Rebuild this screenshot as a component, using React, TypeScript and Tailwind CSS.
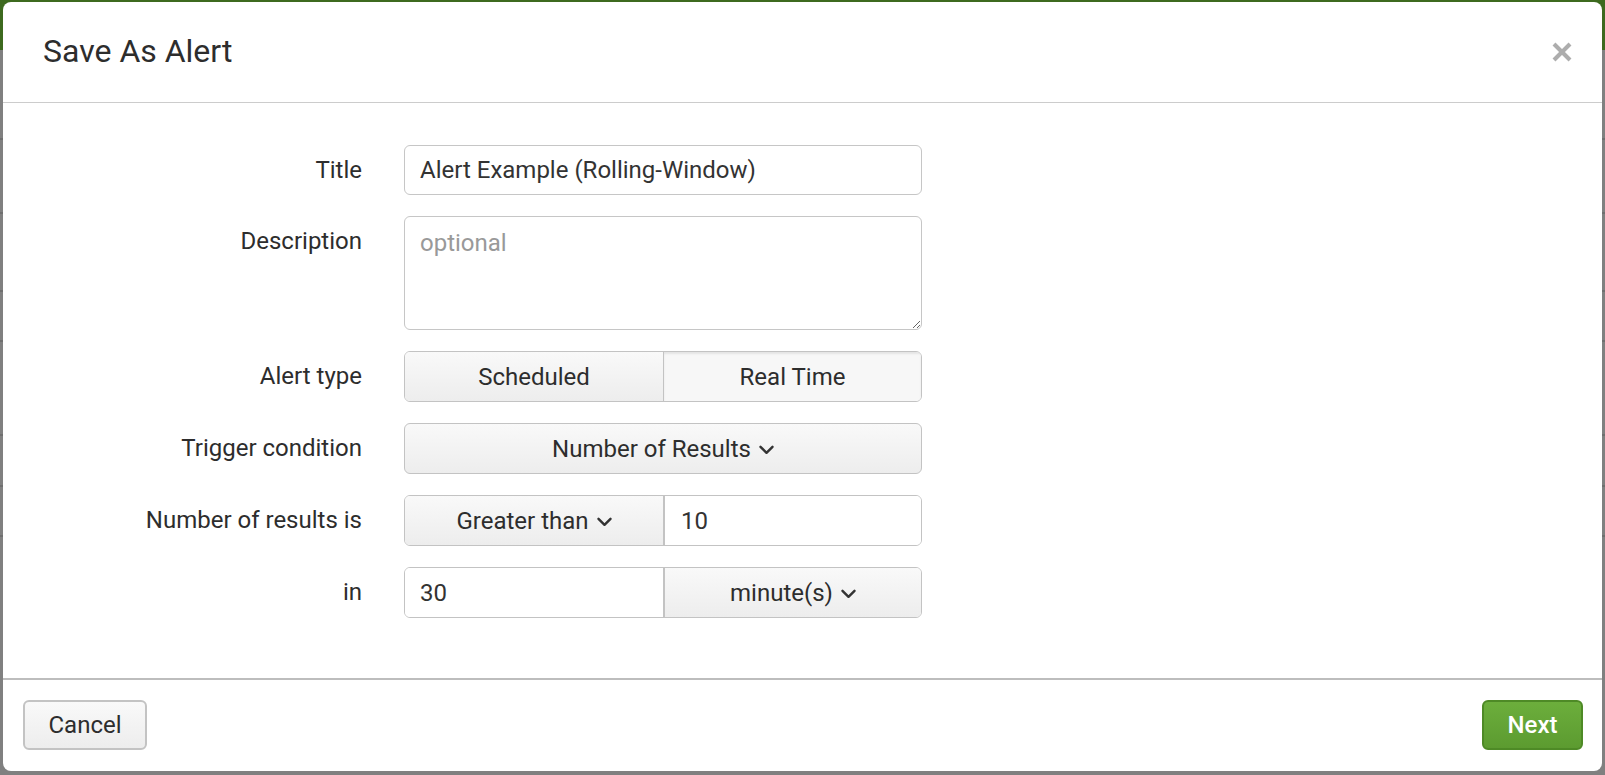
import React from "react";

function Chevron() {
  return (
    <svg width="15" height="10" viewBox="0 0 15 10" className="ml-[8px] mt-[2px]">
      <polyline points="1.5,1.8 7.5,7.8 13.5,1.8" fill="none" stroke="#333" strokeWidth="2.4" strokeLinecap="round" strokeLinejoin="round" />
    </svg>
  );
}

function Label({ children }: { children: React.ReactNode }) {
  return (
    <div className="w-[359px] shrink-0 text-right h-[50px] leading-[50px] text-[24px] text-[#2d2d2d]">{children}</div>
  );
}

export default function App() {
  const btn =
    "flex items-center justify-center bg-linear-to-b from-[#f9f9f9] to-[#ededed] text-[24px] text-[#2d2d2d]";
  return (
    <div className="w-[1605px] h-[775px] overflow-hidden bg-[#808080] font-[Roboto] relative">
      <div className="absolute left-0 top-0 w-full h-[50px] bg-[#3d6a1f]" />
      <div className="absolute left-0 top-[138px] w-full h-[2px] bg-[#6f6f6f]" />
      <div className="absolute left-0 top-[212px] w-full h-[2px] bg-[#6f6f6f]" />
      <div className="absolute left-0 top-[290px] w-full h-[2px] bg-[#6f6f6f]" />
      <div className="absolute left-0 top-[340px] w-full h-[2px] bg-[#6f6f6f]" />
      <div className="absolute left-0 top-[434px] w-full h-[2px] bg-[#6f6f6f]" />
      <div className="absolute left-0 top-[485px] w-full h-[2px] bg-[#6f6f6f]" />
      <div className="absolute left-0 top-[535px] w-full h-[2px] bg-[#6f6f6f]" />
      <div className="absolute left-[3px] top-[2px] w-[1599px] h-[769px] bg-white rounded-[8px] flex flex-col text-[#2d2d2d]">
        <div className="h-[101px] shrink-0 border-b border-[#cccccc] flex items-center justify-between pl-[40px] pr-[30px]">
          <div className="text-[32px] text-[#2d2d2d] leading-none mt-[-2px]">Save As Alert</div>
          <svg width="20" height="20" viewBox="0 0 20 20">
            <line x1="2" y1="2" x2="18" y2="18" stroke="#adadad" strokeWidth="4" />
            <line x1="18" y1="2" x2="2" y2="18" stroke="#adadad" strokeWidth="4" />
          </svg>
        </div>
        <div className="flex-1 pt-[42px] flex flex-col gap-[21px]">
          <div className="flex">
            <Label>Title</Label>
            <div className="ml-[42px] w-[518px] h-[50px] border-[1.5px] border-[#c6c6c6] rounded-[6px] flex items-center pl-[15px] text-[24px] text-[#333]">
              Alert Example (Rolling-Window)
            </div>
          </div>
          <div className="flex">
            <Label>Description</Label>
            <textarea
              placeholder="optional"
              className="ml-[42px] w-[518px] h-[114px] border-[1.5px] border-[#c6c6c6] rounded-[6px] pl-[15px] pt-[11px] text-[24px] leading-[30px] text-[#333] placeholder:text-[#999] outline-none resize-y"
            />
          </div>
          <div className="flex">
            <Label>Alert type</Label>
            <div className="ml-[42px] w-[518px] h-[51px] border-[1.5px] border-[#c3c3c3] rounded-[6px] overflow-hidden flex">
              <div className={btn + " w-[258px]"}>Scheduled</div>
              <div className="flex-1 flex items-center justify-center border-l border-[#c3c3c3] bg-[#f7f7f7] shadow-[inset_0_2px_2px_rgba(0,0,0,0.08)] text-[24px] text-[#2d2d2d]">
                Real Time
              </div>
            </div>
          </div>
          <div className="flex">
            <Label>Trigger condition</Label>
            <div className={"ml-[42px] w-[518px] h-[51px] border-[1.5px] border-[#c3c3c3] rounded-[6px] " + btn}>
              Number of Results
              <Chevron />
            </div>
          </div>
          <div className="flex">
            <Label>Number of results is</Label>
            <div className="ml-[42px] w-[518px] h-[51px] border-[1.5px] border-[#c3c3c3] rounded-[6px] overflow-hidden flex">
              <div className={btn + " w-[258px]"}>
                Greater than
                <Chevron />
              </div>
              <div className="flex-1 flex items-center pl-[16px] border-l-2 border-[#c3c3c3] bg-white text-[24px] text-[#333]">10</div>
            </div>
          </div>
          <div className="flex">
            <Label>in</Label>
            <div className="ml-[42px] w-[518px] h-[51px] border-[1.5px] border-[#c3c3c3] rounded-[6px] overflow-hidden flex">
              <div className="w-[258px] flex items-center pl-[15px] bg-white text-[24px] text-[#333]">30</div>
              <div className={btn + " flex-1 border-l-2 border-[#c3c3c3]"}>
                minute(s)
                <Chevron />
              </div>
            </div>
          </div>
        </div>
        <div className="h-[93px] shrink-0 border-t-2 border-[#bdbdbd] flex items-center justify-between pl-[20px] pr-[19px] pb-[2px]">
          <div className={"w-[124px] h-[50px] border-2 border-[#c3c3c3] rounded-[6px] " + btn}>Cancel</div>
          <div className="w-[101px] h-[50px] border-2 border-[#4e8a26] rounded-[6px] bg-linear-to-b from-[#6cae3c] to-[#5c9b30] flex items-center justify-center text-[24px] text-white font-medium">
            Next
          </div>
        </div>
      </div>
    </div>
  );
}
